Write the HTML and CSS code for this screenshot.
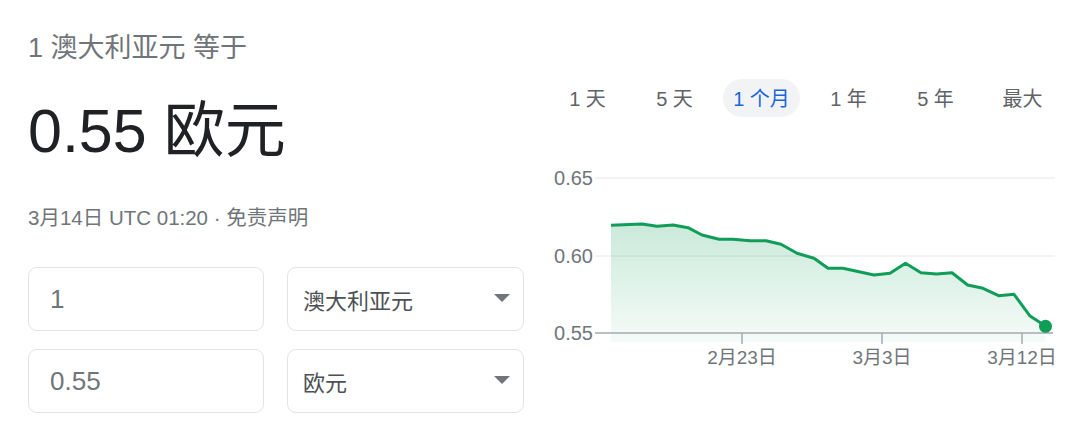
FILE: index.html
```html
<!DOCTYPE html>
<html lang="zh-CN">
<head>
    <meta charset="UTF-8">
    <meta name="viewport" content="width=device-width, initial-scale=1.0">
    <title>货币换算</title>
    <link rel="stylesheet" href="styles.css">
</head>
<body>
    <div id="wrapper">
        <div id="left">
            <div class="title">1 澳大利亚元 等于</div>
            <div class="result">0.55 欧元</div>
            <div class="meta">3月14日 UTC 01:20 · 免责声明</div>
            <div class="fields">
                <div class="field"><span class="amount">1</span></div>
                <div class="field select"><span>澳大利亚元</span><span class="caret"></span></div>
                <div class="field"><span class="amount">0.55</span></div>
                <div class="field select"><span>欧元</span><span class="caret"></span></div>
            </div>
        </div>
        <div id="right">
            <div class="tabs">
                <div class="tab"><span>1 天</span></div>
                <div class="tab"><span>5 天</span></div>
                <div class="tab"><span class="on">1 个月</span></div>
                <div class="tab"><span>1 年</span></div>
                <div class="tab"><span>5 年</span></div>
                <div class="tab"><span>最大</span></div>
            </div>
            <!-- 차트 좌표는 (540,150) 기준 -->
            <svg class="chart" width="540" height="230" viewBox="0 0 540 230">
                <defs>
                    <linearGradient id="area" x1="0" y1="0" x2="0" y2="1">
                        <stop offset="0" stop-color="#0f9d58" stop-opacity="0.22"/>
                        <stop offset="1" stop-color="#0f9d58" stop-opacity="0.04"/>
                    </linearGradient>
                </defs>
                <line class="grid" x1="55" y1="28" x2="515" y2="28"/>
                <line class="grid" x1="55" y1="106" x2="515" y2="106"/>
                <text class="ylab" x="53" y="35">0.65</text>
                <text class="ylab" x="53" y="113">0.60</text>
                <text class="ylab" x="53" y="190">0.55</text>
                <polygon fill="url(#area)" points="71,75.3 102,74 117,76.3 133,75 148,77.7 162,85 179,89.3 193,89.3 210,90.7 226,90.7 241,94.3 257,103.3 274,108.3 288,118.3 303,118.3 319,121.7 334,125 350,123.3 365.5,113.3 381,122.7 396.5,124 412,122.7 427.6,135 443,138.3 458.6,145.7 474,144.3 489.7,165.7 505,175.7 505,192 71,192"/>
                <line class="axis" x1="55" y1="183" x2="513" y2="183"/>
                <line class="axis" x1="202" y1="183" x2="202" y2="194"/>
                <line class="axis" x1="342" y1="183" x2="342" y2="194"/>
                <line class="axis" x1="482" y1="183" x2="482" y2="194"/>
                <text class="xlab" x="202" y="214">2月23日</text>
                <text class="xlab" x="342" y="214">3月3日</text>
                <text class="xlab" x="482" y="214">3月12日</text>
                <polyline class="line" points="71,75.3 102,74 117,76.3 133,75 148,77.7 162,85 179,89.3 193,89.3 210,90.7 226,90.7 241,94.3 257,103.3 274,108.3 288,118.3 303,118.3 319,121.7 334,125 350,123.3 365.5,113.3 381,122.7 396.5,124 412,122.7 427.6,135 443,138.3 458.6,145.7 474,144.3 489.7,165.7 505,175.7"/>
                <circle cx="505.5" cy="176.3" r="6.5" fill="#0f9d58"/>
            </svg>
        </div>
    </div>
</body>
</html>
```

FILE: styles.css
```css
body{
    margin: 0;
    background: #fff;
    font-family: "Liberation Sans", "Noto Sans CJK SC", sans-serif;
}
#wrapper{
    width: 1080px;
    height: 440px;
    display: flex;
}
#left{
    width: 523px;
    padding-left: 28px;
    box-sizing: border-box;
}
.title{
    margin-top: 32px;
    font-size: 27px;
    line-height: 32px;
    color: #70757a;
}
.result{
    margin-top: 35px;
    font-size: 61px;
    line-height: 64px;
    color: #202124;
}
.meta{
    margin-top: 43px;
    font-size: 20.5px;
    line-height: 24px;
    color: #70757a;
}
.fields{
    margin-top: 37px;
    display: grid;
    grid-template-columns: 236px 237px;
    column-gap: 23px;
    row-gap: 18px;
}
.field{
    height: 64px;
    border: 1.5px solid #e1e3e6;
    border-radius: 9px;
    box-sizing: border-box;
    display: flex;
    align-items: center;
    padding-left: 21px;
}
.amount{
    font-size: 26px;
    color: #70757a;
}
.select{
    padding-left: 15px;
    padding-right: 13px;
    justify-content: space-between;
    font-size: 22px;
    color: #4d5156;
}
.caret{
    width: 0;
    height: 0;
    border-left: 8.5px solid transparent;
    border-right: 8.5px solid transparent;
    border-top: 8px solid #70757a;
    margin-top: -3px;
}
#right{
    flex: 1;
    padding-left: 17px;
}
.tabs{
    margin-top: 79px;
    margin-left: 4px;
    width: 522px;
    height: 38px;
    display: grid;
    grid-template-columns: repeat(6, 1fr);
}
.tab{
    display: flex;
    justify-content: center;
    align-items: center;
    font-size: 20px;
    color: #5f6368;
}
.tab span{
    line-height: 36px;
    padding: 2px 10px 0;
    border-radius: 19px;
}
.tab .on{
    background: #f1f3f4;
    color: #1a66d9;
}
.chart{
    display: block;
    margin-top: 33px;
    font-family: "Liberation Sans", "Noto Sans CJK SC", sans-serif;
}
.grid{
    stroke: #eeeff1;
    stroke-width: 1.5;
}
.axis{
    stroke: #a5a9ae;
    stroke-width: 1.5;
}
.line{
    fill: none;
    stroke: #0f9d58;
    stroke-width: 3;
    stroke-linejoin: round;
}
.ylab{
    font-size: 20px;
    fill: #70757a;
    text-anchor: end;
}
.xlab{
    font-size: 19px;
    fill: #70757a;
    text-anchor: middle;
}
```
